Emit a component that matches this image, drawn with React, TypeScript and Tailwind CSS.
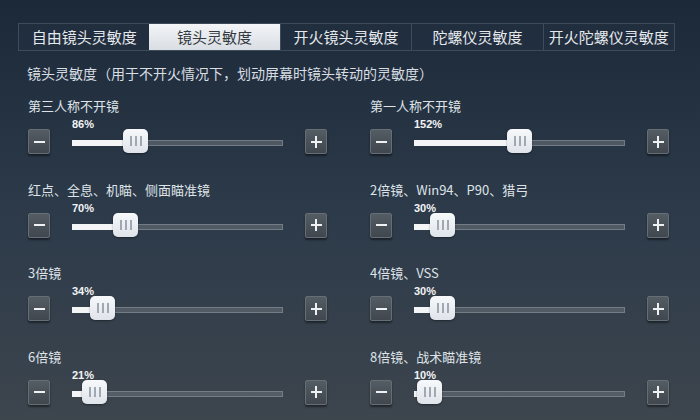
import React from 'react';

const tabs = ['自由镜头灵敏度', '镜头灵敏度', '开火镜头灵敏度', '陀螺仪灵敏度', '开火陀螺仪灵敏度'];

const sliders = [
  { label: '第三人称不开镜', value: 86 },
  { label: '第一人称不开镜', value: 152 },
  { label: '红点、全息、机瞄、侧面瞄准镜', value: 70 },
  { label: '2倍镜、Win94、P90、猎弓', value: 30 },
  { label: '3倍镜', value: 34 },
  { label: '4倍镜、VSS', value: 30 },
  { label: '6倍镜', value: 21 },
  { label: '8倍镜、战术瞄准镜', value: 10 },
];

const StepButton: React.FC<{ plus?: boolean }> = ({ plus }) => (
  <button className="relative flex h-[25px] w-[22px] shrink-0 items-center justify-center rounded-[2px] border border-[#656d75] bg-gradient-to-b from-[#545c64] to-[#40474e] shadow-[0_2px_2px_rgba(0,0,0,0.45)]">
    <span className="block h-[2px] w-[11px] bg-[#eef0f2]" />
    {plus && <span className="absolute left-1/2 top-1/2 h-[12px] w-[2px] -translate-x-1/2 -translate-y-1/2 bg-[#eef0f2]" />}
  </button>
);

const Slider: React.FC<{ label: string; value: number }> = ({ label, value }) => {
  // range is 5% .. 300%, thumb travels 186px
  const left = Math.round(((value - 5) / 295) * 186);
  return (
    <div>
      <div className="h-4 text-[13px] leading-4 text-[#dfe3e7]">{label}</div>
      <div className="mt-[5px] h-[10px] pl-[44px] font-['Liberation_Sans',sans-serif] text-[11px] font-bold leading-[10px] text-[#f2f4f6]">
        {value}%
      </div>
      <div className="flex h-[25px] items-center">
        <StepButton />
        <div className="relative mx-[22px] h-[25px] w-[211px]">
          <div className="absolute left-0 right-0 top-[11px] h-[6px] border border-[#8a929a]/60 bg-[#5f6871]/70" />
          <div className="absolute left-0 top-[11px] h-[6px] bg-[#f3f5f7]" style={{ width: left + 12 }} />
          <div
            className="absolute top-0 flex h-[24px] w-[25px] items-center justify-center gap-[3px] rounded-[5px] bg-gradient-to-b from-[#f7f9fb] to-[#dfe4ea] shadow-[0_1px_2px_rgba(0,0,0,0.4)]"
            style={{ left }}
          >
            <span className="h-[10px] w-[2px] bg-[#a0a8b2]" />
            <span className="h-[10px] w-[2px] bg-[#a0a8b2]" />
            <span className="h-[10px] w-[2px] bg-[#a0a8b2]" />
          </div>
        </div>
        <StepButton plus />
      </div>
    </div>
  );
};

export default function App() {
  return (
    <div className="h-[420px] w-[700px] overflow-hidden bg-gradient-to-b from-[#1c2939] via-[#2c3a4a] to-[#3d454d] pt-[23px] font-['Noto_Sans_CJK_SC',sans-serif]">
      <div className="ml-[18px] flex h-[28px] w-[657px] border border-[#3e4b5b] bg-[#223040]/80">
        {tabs.map((t, i) => (
          <div
            key={t}
            className={`flex flex-1 items-center justify-center whitespace-nowrap text-[15px] ${
              i === 1
                ? 'bg-gradient-to-b from-[#f3f5f7] to-[#d9dee4] text-[#353a41]'
                : 'text-[#e6e9ec]'
            } ${i > 1 ? 'border-l border-[#3e4b5b]' : ''}`}
          >
            {t}
          </div>
        ))}
      </div>
      <div className="ml-[27px] mt-[14px] h-4 text-[14px] leading-4 text-[#d9dee3]">
        镜头灵敏度（用于不开火情况下，划动屏幕时镜头转动的灵敏度）
      </div>
      <div className="ml-[28px] mt-[17px] grid grid-cols-[299px_299px] gap-x-[43px] gap-y-[27.5px]">
        {sliders.map((s) => (
          <Slider key={s.label} label={s.label} value={s.value} />
        ))}
      </div>
    </div>
  );
}
